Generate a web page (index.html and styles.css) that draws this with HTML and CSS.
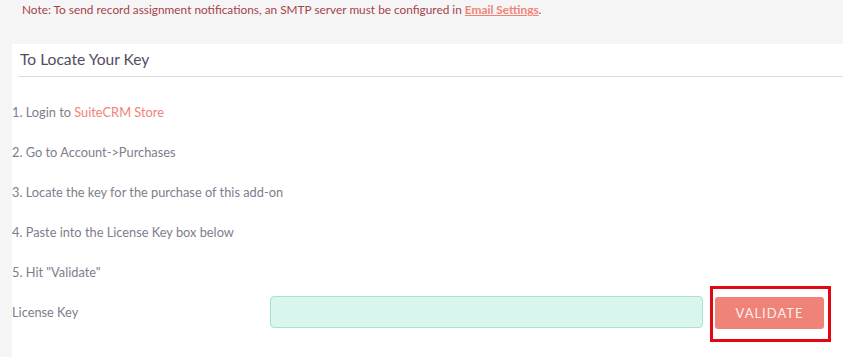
FILE: index.html
```html
<!DOCTYPE html>
<html lang="en">
<head>
    <meta charset="UTF-8">
    <title>License Key</title>
    <link rel="stylesheet" href="styles.css">
</head>
<body>
    <p class="note">
        Note: To send record assignment notifications, an SMTP server must be configured in
        <a href="#" class="note-link">Email Settings</a>.
    </p>

    <div class="panel">
        <h2 class="panel-title">To Locate Your Key</h2>

        <ol class="steps">
            <li>1. Login to <a href="#" class="store-link">SuiteCRM Store</a></li>
            <li>2. Go to Account-&gt;Purchases</li>
            <li>3. Locate the key for the purchase of this add-on</li>
            <li>4. Paste into the License Key box below</li>
            <li>5. Hit "Validate"</li>
        </ol>

        <div class="key-row">
            <label for="licenseKey" class="key-label">License Key</label>
            <input type="text" id="licenseKey" class="key-input">
            <div class="highlight">
                <button type="button" class="btn-validate">VALIDATE</button>
            </div>
        </div>
    </div>
</body>
</html>
```

FILE: styles.css
```css
* {
    box-sizing: border-box;
}

body {
    margin: 0;
    background-color: #f5f5f5;
    font-family: Lato, "Open Sans", sans-serif;
    color: #817c8d;
    height: 357px;
    overflow: hidden;
}

.note {
    margin: 0;
    padding: 2px 22px 0;
    font-size: 11.85px;
    line-height: 16px;
    color: #a5424b;
}

.note-link {
    color: #f08377;
    font-weight: 700;
    text-decoration: underline;
}

.panel {
    margin: 26px 0 0 12px;
    background: #ffffff;
    height: 320px;
}

.panel-title {
    margin: 0 0 0 6px;
    padding: 5px 2px 7px;
    font-size: 15.6px;
    font-weight: 400;
    line-height: 20px;
    color: #534d64;
    border-bottom: 1px solid #dddddd;
}

.steps {
    list-style: none;
    margin: 0;
    padding: 25px 0 0;
}

.steps li {
    font-size: 12.8px;
    line-height: 20px;
    margin-bottom: 20px;
}

.store-link {
    color: #f08377;
    text-decoration: none;
}

.key-row {
    display: flex;
    align-items: center;
    margin-top: -20px;
}

.key-label {
    width: 258px;
    font-size: 12.8px;
    line-height: 20px;
}

.key-input {
    width: 433px;
    height: 32px;
    background: #d8f5ee;
    border: 1px solid #a9e2d5;
    border-radius: 4px;
}

.highlight {
    margin: 4px 0 0 7px;
    padding: 8px 4px 10px 2px;
    border: 3px solid #e30613;
}

.btn-validate {
    display: block;
    width: 109px;
    height: 32px;
    border: none;
    border-radius: 3px;
    background: #f08377;
    color: #fdeeee;
    font-family: Lato, "Open Sans", sans-serif;
    font-size: 13px;
    letter-spacing: 1px;
}
```
